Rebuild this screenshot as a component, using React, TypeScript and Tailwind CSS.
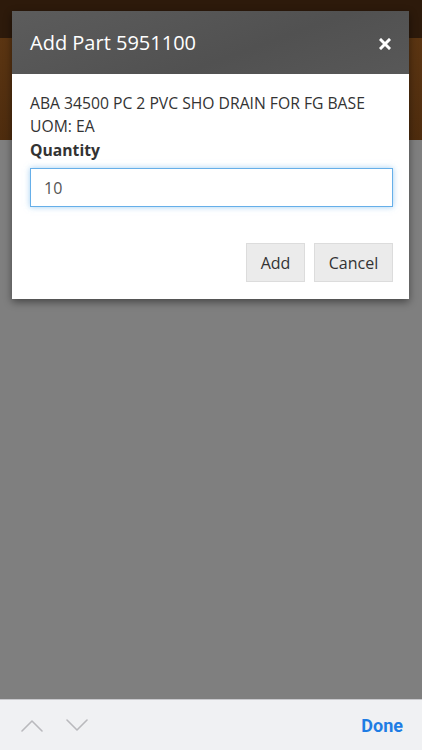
const font = { fontFamily: '"Open Sans", "Noto Sans", sans-serif' };

function Chevron({ up }: { up?: boolean }) {
  return (
    <svg width="22" height="13" viewBox="0 0 22 13" fill="none">
      <path
        d={up ? "M1 12L11 2L21 12" : "M1 1L11 11L21 1"}
        stroke="#b9b9bd"
        strokeWidth="1.6"
        strokeLinecap="round"
        strokeLinejoin="round"
      />
    </svg>
  );
}

export default function App() {
  return (
    <div className="relative h-[750px] w-[422px] overflow-hidden bg-[#7f7f7f]" style={font}>
      {/* page behind the dim overlay */}
      <div className="h-[38px] bg-[#2d1a0b]" />
      <div className="h-[102px] bg-[linear-gradient(180deg,#5b3512,#4e2c0e)]" />

      <div className="absolute left-[12px] top-[11px] w-[397px] bg-white shadow-[0_3px_8px_rgba(0,0,0,0.45)]">
        <div className="flex h-[63px] items-center justify-between bg-[linear-gradient(160deg,#5c5c5c,#515151_60%,#585858)] pl-[18px] pr-[18px]">
          <h2 className="text-[20px] font-normal text-white">Add Part 5951100</h2>
          <svg width="12" height="12" viewBox="0 0 12 12" className="mt-[2px]">
            <path d="M2 2L10 10M10 2L2 10" stroke="white" strokeWidth="3" strokeLinecap="square" />
          </svg>
        </div>

        <div className="px-[18px] pt-[18px] pb-[17px] text-[#333]">
          <p className="text-[15.7px] leading-[23px]">ABA 34500 PC 2 PVC SHO DRAIN FOR FG BASE</p>
          <p className="text-[15.7px] leading-[23px]">UOM: EA</p>
          <label className="block text-[15.7px] font-bold leading-[24px]">Quantity</label>
          <input
            defaultValue="10"
            className="mt-[6px] h-[39px] w-[363px] border border-[#66afe9] px-[13px] text-[16px] text-[#555] shadow-[0_0_6px_rgba(102,175,233,0.6)] outline-none"
            style={font}
          />
          <div className="-mr-[2px] mt-[36px] flex justify-end gap-[9px]">
            <button className="h-[39px] w-[59px] border border-[#dcdcdc] bg-[#ebebeb] text-[16px] text-[#333]">Add</button>
            <button className="h-[39px] w-[79px] border border-[#dcdcdc] bg-[#ebebeb] text-[16px] text-[#333]">Cancel</button>
          </div>
        </div>
      </div>

      <div className="absolute bottom-0 left-0 flex h-[51px] w-full items-center border-t border-[#c8c8cc] bg-[#f0f1f3] pl-[21px] pr-[19px]">
        <div className="flex gap-[23px]">
          <Chevron up />
          <Chevron />
        </div>
        <span
          className="ml-auto text-[18px] font-bold text-[#1e7de4]"
          style={{ fontFamily: 'Roboto, "Liberation Sans", sans-serif' }}
        >
          Done
        </span>
      </div>
    </div>
  );
}
